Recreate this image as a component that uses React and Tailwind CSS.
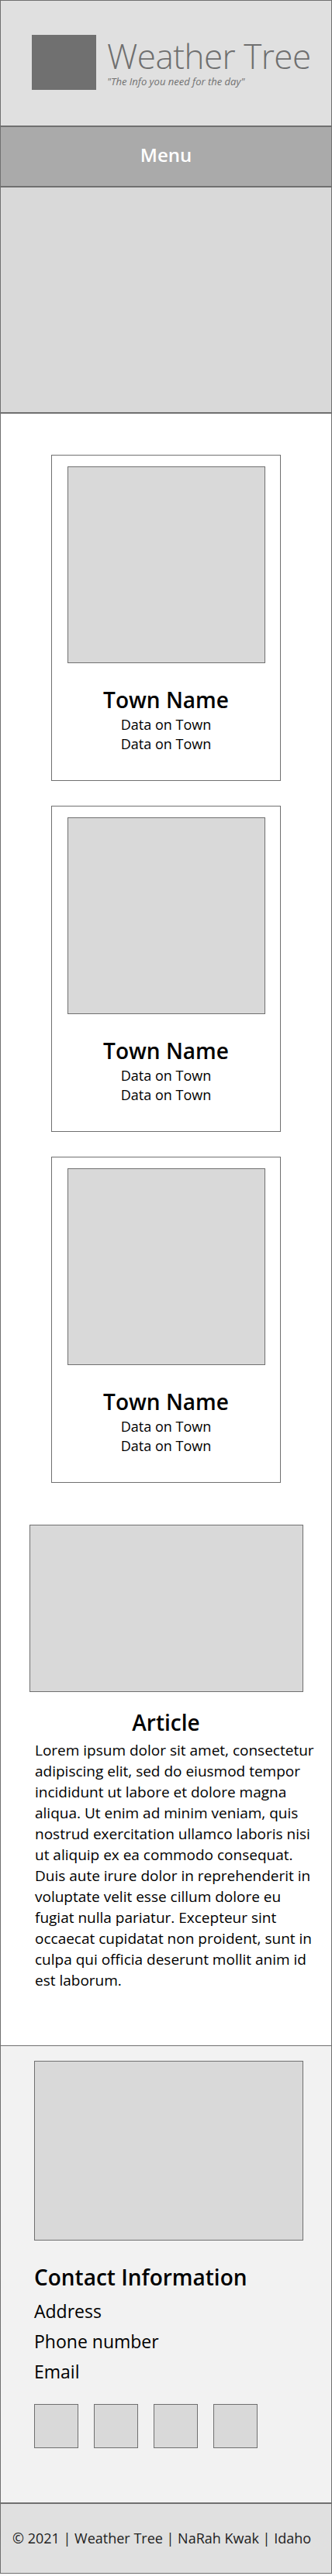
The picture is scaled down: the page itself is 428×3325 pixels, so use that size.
const towns = [1, 2, 3];

const TownCard = () => (
  <div className="w-[296px] h-[421px] mx-auto border border-[#707070] bg-white flex flex-col items-center pt-[14px]">
    <div className="w-[255px] h-[254px] bg-[#d9d9d9] border border-[#707070]"></div>
    <h2 className="mt-[28px] text-[28px] leading-[38px] font-semibold text-black">Town Name</h2>
    <p className="mt-[1px] text-[18px] leading-[25px] text-black">Data on Town</p>
    <p className="text-[18px] leading-[25px] text-black">Data on Town</p>
  </div>
);

const App = () => {
  return (
    <div className="w-[428px] border border-[#707070] bg-white font-['Open_Sans',sans-serif]">
      {/* Header */}
      <header className="h-[163px] bg-[#e0e0e0] border-b-2 border-[#707070] flex items-center pl-[40px] pb-[2px]">
        <div className="w-[83px] h-[71px] bg-[#707070] shrink-0"></div>
        <div className="ml-[14px] flex flex-col">
          <span className="text-[44px] leading-[46px] font-light text-[#6f6f6f] tracking-[-0.5px]">Weather Tree</span>
          <span className="text-[13px] leading-[16px] italic text-[#707070] mt-[2px]">"The Info you need for the day"</span>
        </div>
      </header>

      {/* Menu */}
      <nav className="h-[78px] bg-[#aaaaaa] border-b-2 border-[#707070] flex items-center justify-center pb-[4px]">
        <span className="text-[24px] font-semibold text-white">Menu</span>
      </nav>

      {/* Hero */}
      <div className="h-[292px] bg-[#d9d9d9] border-b-2 border-[#707070]"></div>

      {/* Main */}
      <main className="bg-white pt-[53px] pb-[70px] border-b border-[#707070]">
        <div className="flex flex-col gap-[32px]">
          {towns.map((t) => (
            <TownCard key={t} />
          ))}
        </div>

        <div className="mt-[54px] px-[37px]">
          <div className="w-[353px] h-[216px] bg-[#d9d9d9] border border-[#707070]"></div>
        </div>
        <h2 className="mt-[20px] text-center text-[28px] leading-[38px] font-semibold text-black">Article</h2>
        <p className="mt-[4px] pl-[44px] pr-[22px] text-[19px] leading-[27px] text-black">
          Lorem ipsum dolor sit amet, consectetur adipiscing elit, sed do eiusmod tempor incididunt ut labore et dolore magna aliqua. Ut enim ad minim veniam, quis nostrud exercitation ullamco laboris nisi ut aliquip ex ea commodo consequat. Duis aute irure dolor in reprehenderit in voluptate velit esse cillum dolore eu fugiat nulla pariatur. Excepteur sint occaecat cupidatat non proident, sunt in culpa qui officia deserunt mollit anim id est laborum.
        </p>
      </main>

      {/* Contact */}
      <section className="bg-[#f2f2f2] px-[43px] pt-[19px] pb-[70px]">
        <div className="w-[347px] h-[232px] bg-[#d9d9d9] border border-[#707070]"></div>
        <h2 className="mt-[28px] text-[28px] leading-[38px] font-semibold text-black">Contact Information</h2>
        <div className="mt-[6px] flex flex-col text-[23px] leading-[39px] text-black">
          <span>Address</span>
          <span>Phone number</span>
          <span>Email</span>
        </div>
        <div className="mt-[22px] flex gap-[20px]">
          <div className="w-[57px] h-[57px] bg-[#d9d9d9] border border-[#707070]"></div>
          <div className="w-[57px] h-[57px] bg-[#d9d9d9] border border-[#707070]"></div>
          <div className="w-[57px] h-[57px] bg-[#d9d9d9] border border-[#707070]"></div>
          <div className="w-[57px] h-[57px] bg-[#d9d9d9] border border-[#707070]"></div>
        </div>
      </section>

      {/* Footer */}
      <footer className="h-[91px] bg-[#e0e0e0] border-t-2 border-[#707070] flex items-center pl-[15px]">
        <span className="text-[18px] text-[#222222]">© 2021 | Weather Tree | NaRah Kwak | Idaho</span>
      </footer>
    </div>
  );
};

export default App;
